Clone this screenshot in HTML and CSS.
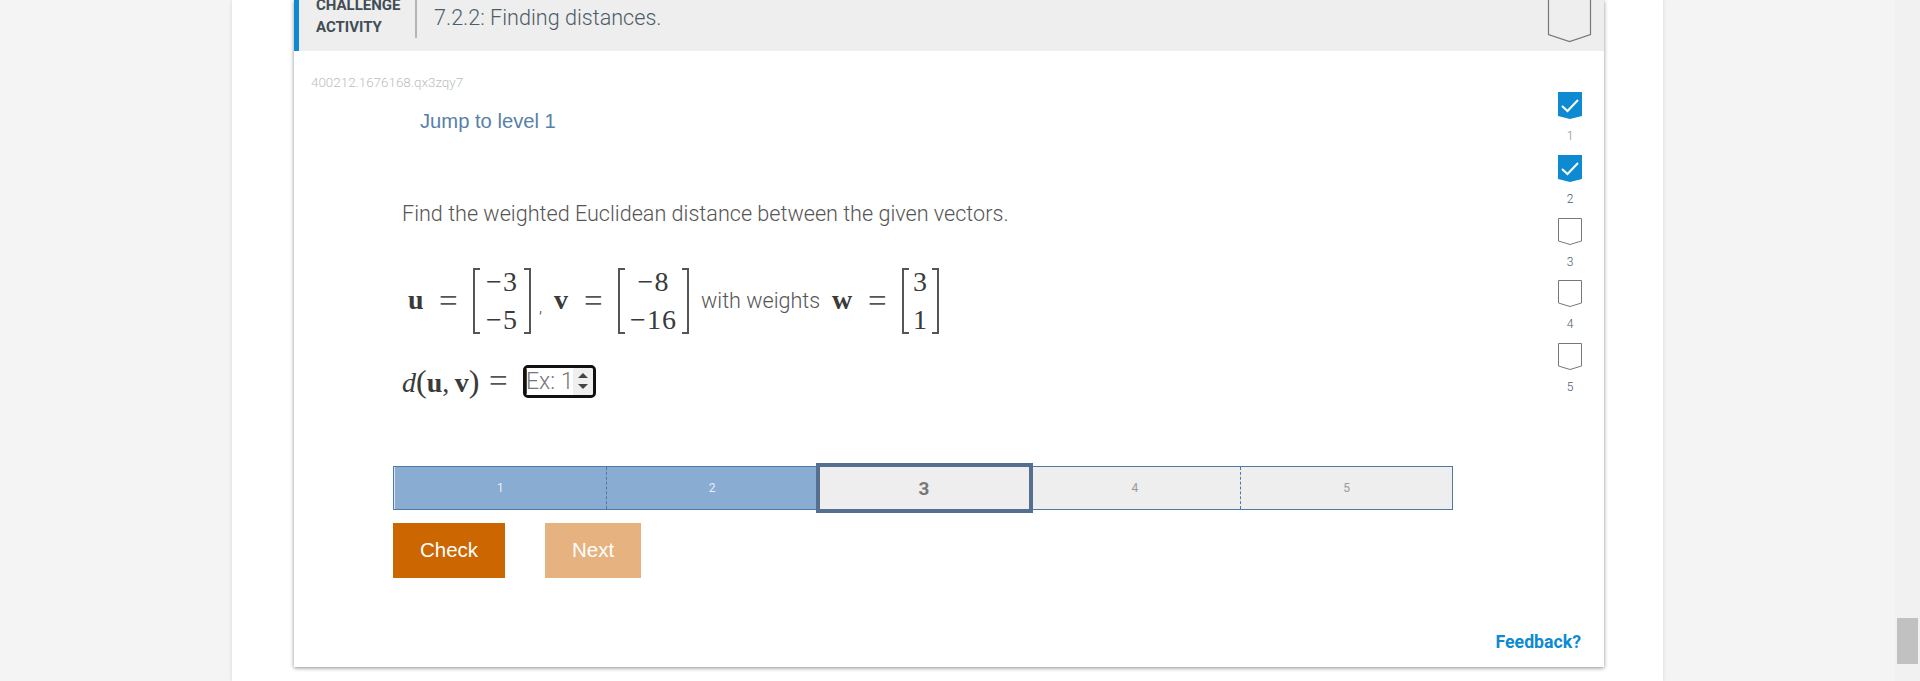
FILE: index.html
```html
<!DOCTYPE html>
<html lang="en">
<head>
<meta charset="utf-8">
<title>7.2.2: Finding distances.</title>
<link rel="stylesheet" href="styles.css">
</head>
<body>
<div class="gutter"></div>
<main class="column">
  <section class="card">
    <header class="card-head">
      <div class="kind">CHALLENGE<br>ACTIVITY</div>
      <h1 class="title">7.2.2: Finding distances.</h1>
      <svg class="head-chip" width="45" height="43" viewBox="0 0 45 43"><path d="M1.500 0V34.500L22.500 41.500L43.500 34.500V0" fill="none" stroke="#777" stroke-width="1.200"/></svg>
    </header>
    <div class="card-body">
      <div class="content">
        <p class="uid">400212.1676168.qx3zqy7</p>
        <a class="jump">Jump to level 1</a>
        <p class="prompt">Find the weighted Euclidean distance between the given vectors.</p>
        <div class="eq">
          <b class="var var-u">u</b><span class="rel">=</span>
          <span class="matrix m1"><i class="brk left"></i><span class="cells"><span>−3</span><span>−5</span></span><i class="brk right"></i></span>
          <span class="comma">,</span>
          <b class="var var-v">v</b><span class="rel">=</span>
          <span class="matrix m2"><i class="brk left"></i><span class="cells"><span>−8</span><span>−16</span></span><i class="brk right"></i></span>
          <span class="words">with weights</span>
          <b class="var var-w">w</b><span class="rel">=</span>
          <span class="matrix m3"><i class="brk left"></i><span class="cells"><span>3</span><span>1</span></span><i class="brk right"></i></span>
        </div>
        <div class="answer">
          <span class="fn"><em>d</em><span class="paren">(</span><b>u</b>,&#8201;<b>v</b><span class="paren">)</span></span>
          <span class="rel">=</span>
          <span class="field">
            <input class="field-input" type="text" placeholder="Ex: 1" aria-label="Answer">
            <span class="spin"><i class="up"></i><i class="down"></i></span>
          </span>
        </div>
        <div class="levels">
          <div class="level done">1</div>
          <div class="level done">2</div>
          <div class="level current">3</div>
          <div class="level">4</div>
          <div class="level">5</div>
        </div>
        <div class="actions">
          <button class="btn check">Check</button>
          <button class="btn next">Next</button>
        </div>
      </div>
      <aside class="chips">
        <div class="chip"><svg width="24" height="27" viewBox="0 0 24 27"><path d="M0 0H24V24L12 27L0 24Z" fill="#0d8ad2"/><path d="M4 14L9.500 19L20 8" fill="none" stroke="#fff" stroke-width="2"/></svg><span class="dim">1</span></div>
        <div class="chip"><svg width="24" height="27" viewBox="0 0 24 27"><path d="M0 0H24V24L12 27L0 24Z" fill="#0d8ad2"/><path d="M4 14L9.500 19L20 8" fill="none" stroke="#fff" stroke-width="2"/></svg><span>2</span></div>
        <div class="chip"><svg width="24" height="27" viewBox="0 0 24 27"><path d="M.5.500H23.500V23L12 26.500L.5 23Z" fill="#fff" stroke="#777"/></svg><span>3</span></div>
        <div class="chip"><svg width="24" height="27" viewBox="0 0 24 27"><path d="M.5.500H23.500V23L12 26.500L.5 23Z" fill="#fff" stroke="#777"/></svg><span>4</span></div>
        <div class="chip"><svg width="24" height="27" viewBox="0 0 24 27"><path d="M.5.500H23.500V23L12 26.500L.5 23Z" fill="#fff" stroke="#777"/></svg><span>5</span></div>
      </aside>
    </div>
    <a class="feedback">Feedback?</a>
  </section>
</main>
<div class="gutter grow"></div>
<div class="scrollbar"><div class="thumb"></div></div>
</body>
</html>
```
FILE: styles.css
```css
* { box-sizing: border-box; }
html, body { margin: 0; height: 681px; overflow: hidden; }
body { display: flex; background: #f4f4f4; font-family: Roboto, sans-serif; color: #555; }
.gutter { width: 232px; flex: none; }
.gutter.grow { flex: 1; }
.column { width: 1431px; flex: none; background: #fff; padding-left: 62px; box-shadow: 0 0 4px rgba(0,0,0,.12); }
.card { width: 1310px; height: 667px; background: #fff; box-shadow: 0 1px 4px rgba(0,0,0,.45); display: flex; flex-direction: column; }
.card-head { height: 51px; flex: none; background: #eee; border-left: 5px solid #0d8ad2; display: flex; align-items: flex-end; overflow: hidden; padding: 0 12px 13px 17px; }
.kind { font-size: 15px; line-height: 22px; font-weight: 700; color: #414d55; width: 101px; height: 44px; flex: none; border-right: 2px solid #b5b5b5; }
.title { align-self: flex-start; margin: 0 0 0 17px; font-size: 21.600px; font-weight: 300; line-height: 36px; color: #4d5c66; white-space: nowrap; }
.head-chip { align-self: flex-start; margin-left: auto; flex: none; }
.card-body { flex: 1; display: flex; min-height: 0; }
.content { flex: 1; padding: 24px 0 0 99px; min-width: 0; }
.uid { margin: 0 0 0 -82px; font-size: 13.400px; line-height: 16px; font-weight: 300; color: #bdbdbd; }
.jump { display: block; margin: 18px 0 0 27px; font: 20.200px/24px "Liberation Sans", sans-serif; color: #5780a8; }
.prompt { margin: 67px 0 0 9px; font-size: 21.600px; line-height: 28px; font-weight: 300; color: #555; }
.eq { display: flex; align-items: center; height: 66px; margin: 40px 0 0 15px; font: 28px/1 "Liberation Serif", serif; color: #3a3a3a; }
.var { flex: none; font-size: 28px; margin-top: -2px; }
.var-u { width: 31px; }
.var-v { width: 30px; }
.var-w { width: 36px; }
.rel { flex: none; font-size: 33px; line-height: 1; width: 34px; color: #555; }
.matrix { display: flex; flex: none; height: 66px; }
.brk { width: 7px; flex: none; border: solid #555; border-width: 2px 0; }
.brk.left { border-left-width: 2px; }
.brk.right { border-right-width: 2px; }
.cells { display: flex; flex-direction: column; justify-content: center; text-align: center; }
.cells span { height: 38px; line-height: 38px; letter-spacing: 1px; }
.m1 .cells { width: 44px; }
.m2 .cells { width: 57px; }
.m3 .cells { width: 23px; }
.comma { width: 23px; flex: none; padding-left: 8px; font: 300 16px/1 Roboto, sans-serif; margin-top: 14px; }
.words { flex: none; width: 143px; padding-left: 12px; font: 300 21.600px/1 Roboto, sans-serif; color: #555; white-space: nowrap; }
.answer { display: flex; align-items: center; height: 34px; margin: 30px 0 0 9px; font: 28px/1 "Liberation Serif", serif; color: #3a3a3a; }
.fn { width: 87px; flex: none; white-space: nowrap; }
.paren { font-size: 32px; font-weight: 300; }
.answer .rel { width: 34px; }
.field { display: flex; width: 73px; height: 33px; flex: none; border: 3px solid #111; border-radius: 5px; background: #fff; overflow: hidden; }
.field-input { width: 47px; flex: none; border: 0; border-left: 1px solid #444; padding: 0; margin: 0; outline: 0; background: #fff; font: 300 23px/1 Roboto, sans-serif; text-indent: -1px; }
.field-input::placeholder { color: #777; opacity: 1; }
.spin { flex: 1; background: #efefef; display: flex; flex-direction: column; align-items: center; justify-content: center; gap: 6px; }
.up, .down { width: 0; height: 0; border: solid transparent; border-width: 0 5.500px; }
.up { border-bottom: 5px solid #444; }
.down { border-top: 5px solid #444; }
.levels { display: flex; width: 1060px; height: 44px; margin-top: 68px; border: 1px solid #4f78a8; }
.level { position: relative; flex: 1; background: #eee; display: flex; align-items: center; justify-content: center; font-size: 12px; font-weight: 400; color: #999; border-right: 1px dashed #4f78a8; }
.level:last-child { border-right: 0; }
.level.done { background: #88acd2; color: #e8eef5; }
.level.done:first-child { border-left: 1px solid #dfe8f2; }
.level.current { font-size: 19px; font-weight: 700; color: #777; border-right: 0; z-index: 1; }
.level.current::after { content: ""; position: absolute; inset: -4px -4px -4px -3px; border: 4px solid #566f91; }
.actions { display: flex; gap: 40px; margin-top: 13px; }
.btn { height: 55px; border: 0; padding: 0; color: #fff; font: 20.500px/1 "Liberation Sans", sans-serif; }
.check { width: 112px; background: #cc6600; }
.next { width: 96px; background: #e6b27f; }
.chips { width: 46px; flex: none; padding-top: 41px; }
.chip { height: 62.750px; width: 24px; display: flex; flex-direction: column; align-items: center; font-size: 12px; font-weight: 300; color: #4d5c66; }
.chip svg { flex: none; display: block; }
.chip span { margin-top: 9px; line-height: 16px; }
.chip .dim { color: #888; }
.feedback { align-self: flex-end; margin: 0 23px 15px 0; font-size: 17.700px; line-height: 20px; font-weight: 700; color: #0d8ad2; }
.scrollbar { width: 25px; flex: none; background: #f1f1f1; padding: 618px 2px 0 2px; }
.thumb { height: 46px; background: #c1c1c1; }
```
